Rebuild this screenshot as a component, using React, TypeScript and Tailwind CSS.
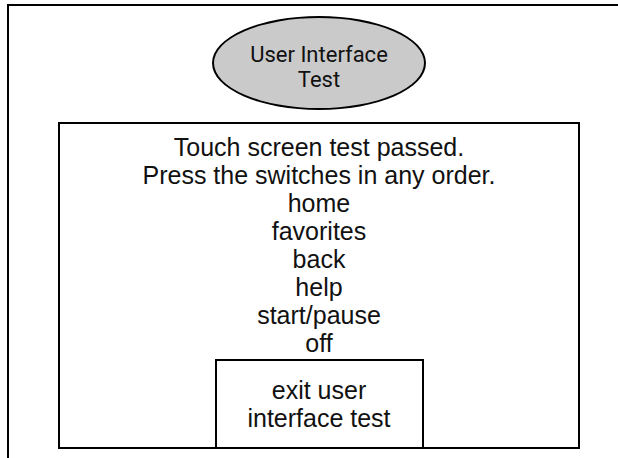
const lines = [
  "Touch screen test passed.",
  "Press the switches in any order.",
  "home",
  "favorites",
  "back",
  "help",
  "start/pause",
  "off",
];

export default function App() {
  return (
    <div className="w-[618px] h-[458px] overflow-hidden bg-white">
      {/* outer frame, runs off the right and bottom edges */}
      <div className="ml-[7px] mt-[4px] w-[640px] h-[480px] border-l-2 border-t-2 border-black">
        <div className="ml-[49px] w-[522px]">
          {/* title bubble */}
          <div className="flex justify-center pt-[10px] pb-[12px]">
            <div
              className="w-[214px] h-[94px] rounded-[50%] border-2 border-black bg-[#cacaca] flex flex-col items-center justify-center pt-[8px] text-[22px] leading-[25px] text-[#111]"
              style={{ fontFamily: "Roboto, sans-serif" }}
            >
              <span>User Interface</span>
              <span>Test</span>
            </div>
          </div>

          {/* message box */}
          <div
            className="h-[327px] border-2 border-black flex flex-col items-center pt-[9px] text-[25px] leading-[28px] text-[#111]"
            style={{ fontFamily: "'Liberation Sans', Arial, sans-serif" }}
          >
            {lines.map((l) => (
              <div key={l}>{l}</div>
            ))}
            <button className="mt-[2px] w-[209px] flex-1 border-x-2 border-t-2 border-black flex flex-col items-center pt-[15px] leading-[28px]">
              <span>exit user</span>
              <span>interface test</span>
            </button>
          </div>
        </div>
      </div>
    </div>
  );
}
